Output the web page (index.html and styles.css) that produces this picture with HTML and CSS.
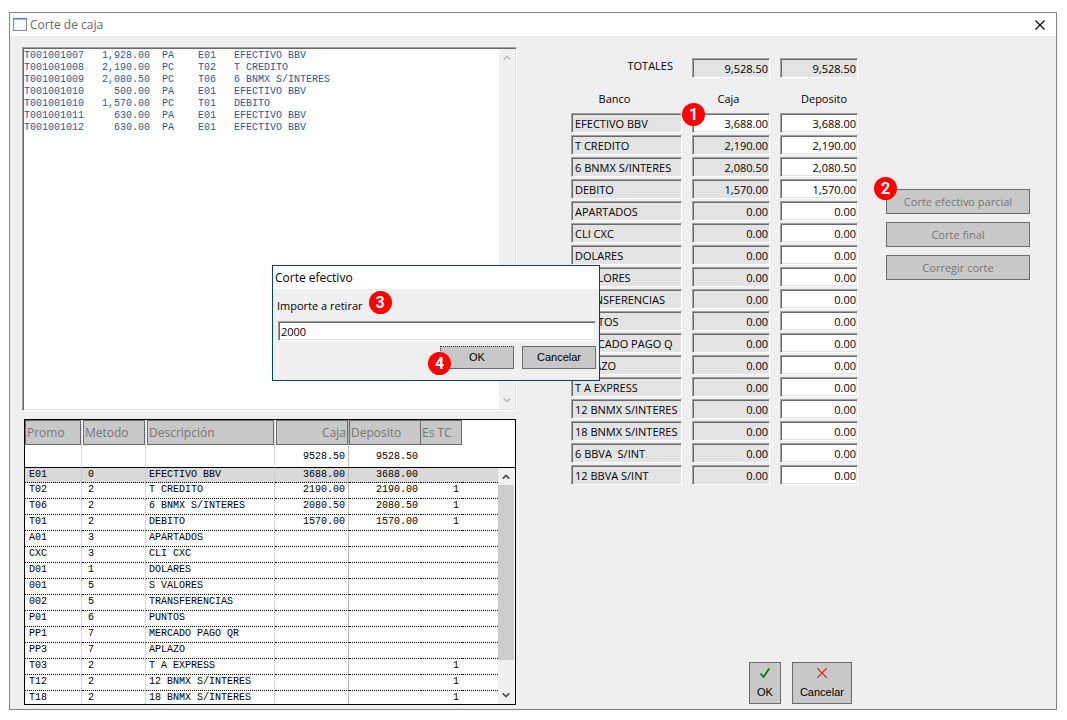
FILE: index.html
```html
<!DOCTYPE html>
<html lang="es">
<head>
<meta charset="utf-8">
<title>Corte de caja</title>
<link rel="stylesheet" href="styles.css">
</head>
<body>
<div class="window">
  <header class="titlebar">
    <svg class="app-icon" width="14" height="13" viewBox="0 0 14 13"><rect x=".5" y=".5" width="13" height="12" fill="#fffff8" stroke="#7f83b8"/><path d="M0 .5h14" stroke="#3c78d8" stroke-width="1"/><path d="M1 1.5h12" stroke="#a9c4f0"/></svg>
    <h1 class="title">Corte de caja</h1>
    <button class="close" type="button" aria-label="Cerrar"><svg width="10" height="10" viewBox="0 0 10 10"><path d="M.5.5l9 9M9.500.5l-9 9" stroke="#000" stroke-width="1.200" fill="none"/></svg></button>
  </header>
  <main class="content">
    <section class="left">
      <div class="log sunken">
<pre class="log-text">T001001007   1,928.00  PA    E01   EFECTIVO BBV
T001001008   2,190.00  PC    T02   T CREDITO
T001001009   2,080.50  PC    T06   6 BNMX S/INTERES
T001001010     500.00  PA    E01   EFECTIVO BBV
T001001010   1,570.00  PC    T01   DEBITO
T001001011     630.00  PA    E01   EFECTIVO BBV
T001001012     630.00  PA    E01   EFECTIVO BBV</pre>
        <div class="scrollbar scrollbar-off">
          <svg width="8" height="6" viewBox="0 0 8 6"><path d="M.7 4.700L4 1.400l3.300 3.300" fill="none" stroke="currentColor" stroke-width="1.800"/></svg>
          <svg width="8" height="6" viewBox="0 0 8 6"><path d="M.7 1.300L4 4.600l3.300-3.300" fill="none" stroke="currentColor" stroke-width="1.800"/></svg>
        </div>
      </div>
      <div class="grid-box">
        <table class="grid">
          <colgroup><col class="c-promo"><col class="c-metodo"><col class="c-desc"><col class="c-caja"><col class="c-dep"><col class="c-tc"><col></colgroup>
          <thead>
            <tr class="heads"><th><span>Promo</span></th><th><span>Metodo</span></th><th><span>Descripción</span></th><th class="num"><span>Caja</span></th><th><span>Deposito</span></th><th><span>Es TC</span></th><td></td></tr>
            <tr class="sums"><td></td><td></td><td></td><td>9528.50</td><td>9528.50</td><td></td><td></td></tr>
          </thead>
          <tbody>
            <tr class="selected"><td>E01</td><td>0</td><td>EFECTIVO BBV</td><td>3688.00</td><td>3688.00</td><td></td><td></td></tr>
            <tr><td>T02</td><td>2</td><td>T CREDITO</td><td>2190.00</td><td>2190.00</td><td>1</td><td></td></tr>
            <tr><td>T06</td><td>2</td><td>6 BNMX S/INTERES</td><td>2080.50</td><td>2080.50</td><td>1</td><td></td></tr>
            <tr><td>T01</td><td>2</td><td>DEBITO</td><td>1570.00</td><td>1570.00</td><td>1</td><td></td></tr>
            <tr><td>A01</td><td>3</td><td>APARTADOS</td><td></td><td></td><td></td><td></td></tr>
            <tr><td>CXC</td><td>3</td><td>CLI CXC</td><td></td><td></td><td></td><td></td></tr>
            <tr><td>D01</td><td>1</td><td>DOLARES</td><td></td><td></td><td></td><td></td></tr>
            <tr><td>001</td><td>5</td><td>S VALORES</td><td></td><td></td><td></td><td></td></tr>
            <tr><td>002</td><td>5</td><td>TRANSFERENCIAS</td><td></td><td></td><td></td><td></td></tr>
            <tr><td>P01</td><td>6</td><td>PUNTOS</td><td></td><td></td><td></td><td></td></tr>
            <tr><td>PP1</td><td>7</td><td>MERCADO PAGO QR</td><td></td><td></td><td></td><td></td></tr>
            <tr><td>PP3</td><td>7</td><td>APLAZO</td><td></td><td></td><td></td><td></td></tr>
            <tr><td>T03</td><td>2</td><td>T A EXPRESS</td><td></td><td></td><td>1</td><td></td></tr>
            <tr><td>T12</td><td>2</td><td>12 BNMX S/INTERES</td><td></td><td></td><td>1</td><td></td></tr>
            <tr class="last"><td>T18</td><td>2</td><td>18 BNMX S/INTERES</td><td></td><td></td><td>1</td><td></td></tr>
          </tbody>
        </table>
        <div class="grid-side">
          <div class="grid-corner"></div>
          <div class="scrollbar">
            <svg width="8" height="6" viewBox="0 0 8 6"><path d="M.7 4.700L4 1.400l3.300 3.300" fill="none" stroke="currentColor" stroke-width="1.800"/></svg>
            <div class="thumb"></div>
            <svg width="8" height="6" viewBox="0 0 8 6"><path d="M.7 1.300L4 4.600l3.300-3.300" fill="none" stroke="currentColor" stroke-width="1.800"/></svg>
          </div>
        </div>
      </div>
    </section>
    <section class="right">
      <div class="upper">
        <form class="totals">
          <span class="totals-label">TOTALES</span>
          <input class="field sunken" value="9,528.50" aria-label="Total caja" readonly>
          <input class="field sunken" value="9,528.50" aria-label="Total deposito" readonly>
          <span class="head head-bank">Banco</span><span class="head">Caja</span><span class="head head-deposit">Deposito</span>
          <label class="bank sunken" for="b1">EFECTIVO BBV</label><div class="anchor"><input id="b1" class="field editable sunken" value="3,688.00"><span class="badge badge-field">1</span></div><input class="field editable sunken" value="3,688.00" aria-label="Deposito EFECTIVO BBV">
          <label class="bank sunken" for="b2">T CREDITO</label><input id="b2" class="field sunken" value="2,190.00" readonly><input class="field editable sunken" value="2,190.00" aria-label="Deposito T CREDITO">
          <label class="bank sunken" for="b3">6 BNMX S/INTERES</label><input id="b3" class="field sunken" value="2,080.50" readonly><input class="field editable sunken" value="2,080.50" aria-label="Deposito 6 BNMX">
          <label class="bank sunken" for="b4">DEBITO</label><input id="b4" class="field sunken" value="1,570.00" readonly><input class="field editable sunken" value="1,570.00" aria-label="Deposito DEBITO">
          <label class="bank sunken" for="b5">APARTADOS</label><input id="b5" class="field sunken" value="0.00" readonly><input class="field editable sunken" value="0.00" aria-label="Deposito APARTADOS">
          <label class="bank sunken" for="b6">CLI CXC</label><input id="b6" class="field sunken" value="0.00" readonly><input class="field editable sunken" value="0.00" aria-label="Deposito CLI CXC">
          <label class="bank sunken" for="b7">DOLARES</label><input id="b7" class="field sunken" value="0.00" readonly><input class="field editable sunken" value="0.00" aria-label="Deposito DOLARES">
          <label class="bank sunken" for="b8">S VALORES</label><input id="b8" class="field sunken" value="0.00" readonly><input class="field editable sunken" value="0.00" aria-label="Deposito S VALORES">
          <label class="bank sunken" for="b9">TRANSFERENCIAS</label><input id="b9" class="field sunken" value="0.00" readonly><input class="field editable sunken" value="0.00" aria-label="Deposito TRANSFERENCIAS">
          <label class="bank sunken" for="b10">PUNTOS</label><input id="b10" class="field sunken" value="0.00" readonly><input class="field editable sunken" value="0.00" aria-label="Deposito PUNTOS">
          <label class="bank sunken" for="b11">MERCADO PAGO Q</label><input id="b11" class="field sunken" value="0.00" readonly><input class="field editable sunken" value="0.00" aria-label="Deposito MERCADO PAGO">
          <label class="bank sunken" for="b12">APLAZO</label><input id="b12" class="field sunken" value="0.00" readonly><input class="field editable sunken" value="0.00" aria-label="Deposito APLAZO">
          <label class="bank sunken" for="b13">T A EXPRESS</label><input id="b13" class="field sunken" value="0.00" readonly><input class="field editable sunken" value="0.00" aria-label="Deposito T A EXPRESS">
          <label class="bank sunken" for="b14">12 BNMX S/INTERES</label><input id="b14" class="field sunken" value="0.00" readonly><input class="field editable sunken" value="0.00" aria-label="Deposito 12 BNMX">
          <label class="bank sunken" for="b15">18 BNMX S/INTERES</label><input id="b15" class="field sunken" value="0.00" readonly><input class="field editable sunken" value="0.00" aria-label="Deposito 18 BNMX">
          <label class="bank sunken" for="b16">6 BBVA  S/INT</label><input id="b16" class="field sunken" value="0.00" readonly><input class="field editable sunken" value="0.00" aria-label="Deposito 6 BBVA">
          <label class="bank sunken" for="b17">12 BBVA S/INT</label><input id="b17" class="field sunken" value="0.00" readonly><input class="field editable sunken" value="0.00" aria-label="Deposito 12 BBVA">
        </form>
        <div class="actions">
          <div class="anchor"><button class="btn action" type="button" disabled>Corte efectivo parcial</button><span class="badge badge-action">2</span></div>
          <button class="btn action" type="button" disabled>Corte final</button>
          <button class="btn action" type="button" disabled>Corregir corte</button>
        </div>
      </div>
      <footer class="confirm">
        <button class="btn tall" type="button"><svg width="10" height="10" viewBox="0 0 10 10"><path d="M.5 5.500l3 3.500L9.300.5" fill="none" stroke="#007f0e" stroke-width="1.800"/></svg>OK</button>
        <button class="btn tall" type="button"><svg width="10" height="10" viewBox="0 0 10 10"><path d="M.3.3l9.400 9.400M9.700.3L.3 9.700" fill="none" stroke="#d02020" stroke-width="1.200"/></svg>Cancelar</button>
      </footer>
    </section>
  </main>
</div>
<div class="dialog" role="dialog" aria-labelledby="dlg-title">
  <h2 class="dialog-title" id="dlg-title">Corte efectivo</h2>
  <div class="dialog-body">
    <div class="prompt"><label for="importe">Importe a retirar</label><span class="badge">3</span></div>
    <input id="importe" class="amount sunken" value="2000">
    <div class="dialog-buttons">
      <div class="anchor"><button class="btn small default" type="button">OK</button><span class="badge badge-ok">4</span></div>
      <button class="btn small" type="button">Cancelar</button>
    </div>
  </div>
</div>
</body>
</html>
```

FILE: styles.css
```css
* { box-sizing: border-box; }
body {
  margin: 0;
  padding: 12px 10px 10px 9px;
  min-height: 100vh;
  display: flex;
  background: #fff;
  color: #000;
  font: 11px/16px "Open Sans", "Noto Sans", sans-serif;
}
button, input { font: inherit; color: inherit; border-radius: 0; margin: 0; }
svg { display: block; flex: none; }

.window {
  flex: 1;
  display: flex;
  flex-direction: column;
  border: 1px solid #838383;
  background: #efefef;
}
.titlebar {
  display: flex;
  align-items: center;
  gap: 3px;
  height: 23px;
  padding: 0 11px 0 3px;
  background: #fff;
}
.title { margin: 0; font-size: 12px; font-weight: 400; color: #666; }
.close { margin-left: auto; padding: 0; border: 0; background: none; }

.content { flex: 1; display: flex; padding: 11px 26px 4px 12px; }
.left { flex: none; width: 495px; display: flex; flex-direction: column; gap: 8px; }

.sunken {
  border: 1px solid;
  border-color: #a0a0a0 #fff #fff #a0a0a0;
  box-shadow: inset 1px 1px #696969, inset -1px -1px #e3e3e3;
}
.log { flex: 1; display: flex; justify-content: space-between; padding: 1px; background: #fff; }
.log-text {
  margin: 0;
  padding: 1px 0;
  color: #1f5a94;
  font: 10px/12px "Liberation Mono", monospace;
}
.scrollbar {
  width: 16px;
  display: flex;
  flex-direction: column;
  align-items: center;
  justify-content: space-between;
  padding: 6px 0;
  background: #f0f0f0;
  color: #505050;
}
.scrollbar-off { color: #bfbfbf; }
.thumb { flex: 1; width: 100%; margin: 5px 0 32px; background: #cdcdcd; }

.grid-box { margin: 0 1px 0 2px; display: flex; border: 1px solid #000; background: #fff; }
.grid {
  flex: 1;
  table-layout: fixed;
  border-spacing: 0;
  font: 10px/12px "Liberation Mono", monospace;
}
.c-promo { width: 57px; }
.c-metodo { width: 64px; }
.c-desc { width: 129px; }
.c-caja { width: 74px; }
.c-dep { width: 72px; }
.c-tc { width: 41px; }
.grid th { height: 25px; padding: 0; font: 12px/24px "Open Sans", "Noto Sans", sans-serif; color: #777; text-align: left; }
.grid th span { display: block; height: 25px; padding: 0 1px; border: 1px solid #6b6b6b; background: #c8c8c8; }
.grid th.num { text-align: right; }
.grid th:nth-child(2) span, .grid th:nth-child(3) span, .grid th:nth-child(4) span { margin-left: 1px; }
.grid th:nth-child(6) span { border-left: 0; }
.grid td { height: 16px; padding: 1px 4px 0; border-bottom: 1px dotted #000; white-space: nowrap; vertical-align: top; }
.grid .heads td { border-bottom: 0; }
.grid .sums td { height: 23px; padding-top: 6px; border-bottom: 1px solid #000; }
.grid .selected td { height: 15px; background: #d9d9d9; }
.grid .last td { height: 13px; border-bottom: 0; }
.grid tr > :nth-child(-n+3) { border-right: 1px dotted #bbb; }
.grid tr > :nth-child(4) { border-right: 1px solid #bbb; }
.grid td:nth-child(2) { padding-left: 6px; }
.grid td:nth-child(3) { padding-left: 3px; }
.grid td:nth-child(n+4) { padding-right: 3px; text-align: right; }
.grid-side { display: flex; flex-direction: column; background: #fff; }
.grid-corner { height: 48px; width: 17px; border-bottom: 1px solid #000; }
.grid-side .scrollbar { flex: 1; }

.right { flex: 1; display: flex; flex-direction: column; justify-content: space-between; padding-left: 54px; }
.upper { display: flex; justify-content: space-between; padding-top: 11px; }
.totals { display: grid; grid-template-columns: 111px 78px 78px; gap: 2px 10px; }
.totals-label { padding-right: 9px; text-align: right; }
.head { height: 31px; padding: 11px 5px 0 0; text-align: center; }
.head-bank { padding-right: 24px; }
.head-deposit { padding: 11px 0 0 10px; }
.bank { height: 20px; padding: 2px 3px 0; overflow: hidden; white-space: pre; background: #e3e3e3; }
.field { display: block; width: 100%; height: 20px; padding: 1px 1px 0; text-align: right; background: #e3e3e3; }
.editable { background: #fff; }
.anchor { position: relative; display: grid; }

.btn { border: 1px solid #6b6b6b; padding: 0; background: #c8c8c8; font: 11px/14px "Liberation Sans", Arial, sans-serif; color: #000; }
.actions { width: 144px; display: flex; flex-direction: column; gap: 8px; padding-top: 131px; }
.action { height: 25px; color: #777; font: 11px/16px "Open Sans", "Noto Sans", sans-serif; }
.confirm { display: flex; gap: 11px; padding: 0 0 1px 178px; }
.tall { height: 42px; padding: 0 7px; display: flex; flex-direction: column; align-items: center; justify-content: center; gap: 7px; }

.badge {
  width: 23px;
  height: 23px;
  border-radius: 50%;
  background: #f00;
  color: #fff;
  font: bold 16px/23px Roboto, "Liberation Sans", sans-serif;
  text-align: center;
}
.badge-field, .badge-action, .badge-ok { position: absolute; z-index: 1; }
.badge-field { left: -10px; top: -10px; }
.badge-action { left: -12px; top: -12px; }
.badge-ok { left: -12px; top: 6px; }

.dialog { position: absolute; left: 272px; top: 265px; width: 328px; border: 1px solid #00427a; background: #efefef; }
.dialog-title { margin: 0; height: 23px; padding: 4px 2px; font-size: 12px; line-height: 16px; font-weight: 400; background: #fff; }
.dialog-body { display: flex; flex-direction: column; padding: 2px 3px 11px 4px; }
.prompt { display: flex; align-items: center; gap: 6px; height: 30px; }
.prompt .badge { align-self: flex-start; }
.amount { height: 20px; margin-left: 1px; padding: 0 2px; background: #fff; }
.dialog-buttons { display: flex; justify-content: flex-end; gap: 8px; padding-top: 5px; }
.small { width: 74px; height: 23px; padding-bottom: 1px; }
.default { border-top-style: dotted; border-left-style: dotted; border-color: #333 #6b6b6b #6b6b6b #333; }
```
